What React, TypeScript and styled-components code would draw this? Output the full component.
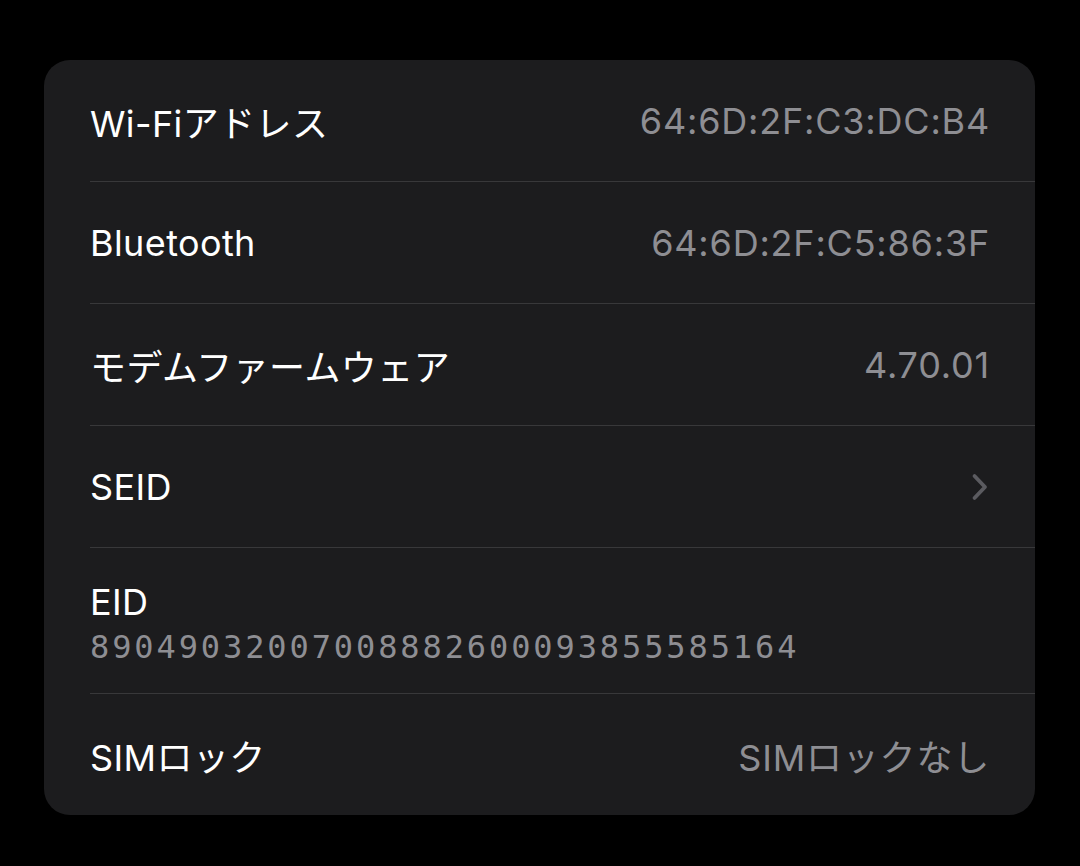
import React from 'react';
import styled, { createGlobalStyle } from 'styled-components';

const GlobalStyle = createGlobalStyle`
    html, body {
        margin: 0;
        padding: 0;
        background: #000;
    }
    body {
        font-family: "Inter", "Noto Sans CJK JP", sans-serif;
        -webkit-font-smoothing: antialiased;
    }
`;

const Page = styled.div`
    width: 1080px;
    height: 866px;
    box-sizing: border-box;
    padding: 60px 45px 0 44px;
    background: #000;
`;

const Card = styled.div`
    background: #1c1c1e;
    border-radius: 26px;
    overflow: hidden;
    display: flex;
    flex-direction: column;
`;

const Row = styled.div<{ $tall?: boolean }>`
    display: flex;
    align-items: center;
    justify-content: space-between;
    height: ${(p) => (p.$tall ? '146px' : '122px')};
    padding: 0 46px 0 46px;
    box-sizing: border-box;
    &:first-child {
        height: 121px;
    }
    & + & {
        border-top: 1px solid #38383a;
        margin-left: 46px;
        padding-left: 0;
    }
`;

const Label = styled.span`
    color: #ffffff;
    font-size: 36px;
    letter-spacing: 0.4px;
`;

const Value = styled.span`
    color: #8e8e93;
    font-size: 36px;
    letter-spacing: 0.8px;
    margin-right: -1px;
`;

const Stack = styled.div`
    display: flex;
    flex-direction: column;
    gap: 4px;
    padding-top: 4px;
`;

const Mono = styled.span`
    color: #8e8e93;
    font-family: "DejaVu Sans Mono", monospace;
    font-size: 32px;
    letter-spacing: 2.9px;
`;

const Chevron = () => (
    <svg width="18" height="28" viewBox="0 0 18 28" fill="none">
        <path d="M3.5 3 L14 14 L3.5 25" stroke="#5b5b60" strokeWidth="3.8" strokeLinecap="round" strokeLinejoin="round" />
    </svg>
);

const rows = [
    { label: 'Wi-Fiアドレス', value: '64:6D:2F:C3:DC:B4' },
    { label: 'Bluetooth', value: '64:6D:2F:C5:86:3F' },
    { label: 'モデムファームウェア', value: '4.70.01' },
];

export default function App() {
    return (
        <Page>
            <GlobalStyle />
            <Card>
                {rows.map((r) => (
                    <Row key={r.label}>
                        <Label>{r.label}</Label>
                        <Value>{r.value}</Value>
                    </Row>
                ))}
                <Row>
                    <Label>SEID</Label>
                    <Chevron />
                </Row>
                <Row $tall>
                    <Stack>
                        <Label>EID</Label>
                        <Mono>89049032007008882600093855585164</Mono>
                    </Stack>
                </Row>
                <Row>
                    <Label>SIMロック</Label>
                    <Value>SIMロックなし</Value>
                </Row>
            </Card>
        </Page>
    );
}
